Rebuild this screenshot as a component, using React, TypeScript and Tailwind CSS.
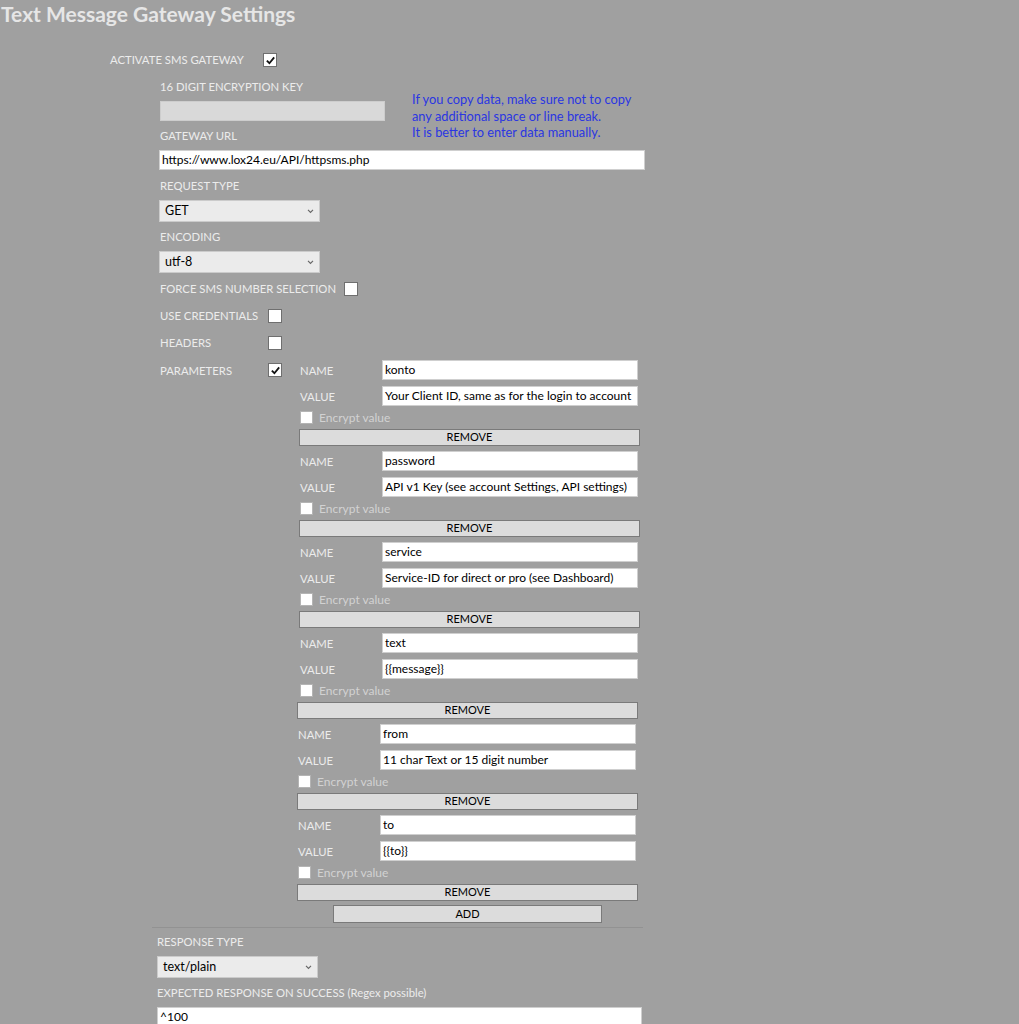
import React from "react";

type Param = { name: string; value: string; shift?: boolean; shiftRemove?: boolean };

const params: Param[] = [
  { name: "konto", value: "Your Client ID, same as for the login to account" },
  { name: "password", value: "API v1 Key (see account Settings, API settings)" },
  { name: "service", value: "Service-ID for direct or pro (see Dashboard)" },
  { name: "text", value: "{{message}}", shiftRemove: true },
  { name: "from", value: "11 char Text or 15 digit number", shift: true, shiftRemove: true },
  { name: "to", value: "{{to}}", shift: true, shiftRemove: true },
];

function CheckBox({ checked = false, small = false }: { checked?: boolean; small?: boolean }) {
  return (
    <span
      className={`flex shrink-0 items-center justify-center border bg-white ${
        small ? "h-[13px] w-[13px] border-[#b4b4b4]" : "h-[14px] w-[14px] border-[#6f6f6f]"
      }`}
    >
      {checked && (
        <svg viewBox="0 0 12 12" className="h-[11px] w-[11px]">
          <path d="M2 6.2 L4.8 9 L10 2.6" fill="none" stroke="#111" strokeWidth="2" />
        </svg>
      )}
    </span>
  );
}

function Label({ children, className = "" }: { children: React.ReactNode; className?: string }) {
  return (
    <div className={`h-[16px] whitespace-nowrap text-[11.3px] leading-[16px] text-[#ececec] uppercase ${className}`}>
      {children}
    </div>
  );
}

function TextBox({ value, className = "" }: { value: string; className?: string }) {
  return (
    <div
      className={`flex h-[20px] items-center overflow-hidden whitespace-nowrap border border-[#cfcfcf] bg-white px-[2px] text-[12px] text-black ${className}`}
    >
      {value}
    </div>
  );
}

function Select({ value, className = "" }: { value: string; className?: string }) {
  return (
    <div
      className={`flex h-[22px] w-[161px] items-center justify-between border border-[#cbcbcb] bg-[#ebebeb] pl-[5px] pr-[5px] text-[12.5px] text-black ${className}`}
    >
      <span>{value}</span>
      <svg viewBox="0 0 8 6" className="h-[5px] w-[7px]">
        <path d="M1 1 L4 4 L7 1" fill="none" stroke="#666" strokeWidth="1.4" />
      </svg>
    </div>
  );
}

function Button({ label, className = "" }: { label: string; className?: string }) {
  return (
    <div
      className={`flex items-center justify-center border border-[#7a7a7a] bg-[#dcdcdc] text-[11px] text-black ${className}`}
    >
      {label}
    </div>
  );
}

function ParamBlock({ p }: { p: Param }) {
  return (
    <div className="flex flex-col">
      <div className={`flex h-[20px] items-center ${p.shift ? "-ml-[2px]" : ""}`}>
        <span className="w-[82px] pt-[2px] text-[11.3px] text-[#ececec]">NAME</span>
        <TextBox value={p.name} className="w-[256px]" />
      </div>
      <div className={`mt-[6px] flex h-[20px] items-center ${p.shift ? "-ml-[2px]" : ""}`}>
        <span className="w-[82px] pt-[2px] text-[11.3px] text-[#ececec]">VALUE</span>
        <TextBox value={p.value} className="w-[256px]" />
      </div>
      <div className={`mt-[5px] flex h-[13px] items-center gap-[6px] ${p.shift ? "-ml-[2px]" : ""}`}>
        <CheckBox small />
        <span className="text-[12px] text-[#d2d2d2]">Encrypt value</span>
      </div>
      <Button label="REMOVE" className={`mt-[5px] h-[17px] w-[341px] ${p.shiftRemove ? "-ml-[3px]" : "-ml-[1px]"}`} />
    </div>
  );
}

export default function App() {
  return (
    <div className="min-h-[1024px] bg-[#a0a0a0]" style={{ fontFamily: "Lato, sans-serif" }}>
      <h1 className="h-[28px] pl-[1px] pt-[1px] text-[21px] font-bold leading-[26px] text-[#e6e6e6]">
        Text Message Gateway Settings
      </h1>

      <div className="mt-[25px] flex h-[14px] items-center pl-[110px]">
        <span className="w-[153px] whitespace-nowrap pt-[1px] text-[11.3px] text-[#ececec]">ACTIVATE SMS GATEWAY</span>
        <CheckBox checked />
      </div>

      <div className="pl-[159px]">
        <div className="flex">
          <div className="flex w-[253px] flex-col">
            <Label className="mt-[12px] pl-[1px]">16 Digit Encryption Key</Label>
            <div className="mt-[6px] ml-[1px] h-[20px] w-[225px] border border-[#cdcdcd] bg-[#d9d9d9]" />
            <Label className="mt-[7px] pl-[1px]">Gateway URL</Label>
          </div>
          <div className="mt-[24px] text-[12.8px] leading-[16.5px] text-[#2a36e2]">
            <div>If you copy data, make sure not to copy</div>
            <div>any additional space or line break.</div>
            <div>It is better to enter data manually.</div>
          </div>
        </div>
        <TextBox value="https://www.lox24.eu/API/httpsms.php" className="mt-[6px] w-[486px]" />

        <Label className="mt-[8px] pl-[1px]">Request Type</Label>
        <Select value="GET" className="mt-[6px]" />
        <Label className="mt-[7px] pl-[1px]">Encoding</Label>
        <Select value="utf-8" className="mt-[6px]" />

        <div className="mt-[9px] flex h-[14px] items-center pl-[1px]">
          <span className="w-[184px] whitespace-nowrap pt-[1px] text-[11.3px] text-[#ececec]">FORCE SMS NUMBER SELECTION</span>
          <CheckBox />
        </div>
        <div className="mt-[13px] flex h-[14px] items-center pl-[1px]">
          <span className="w-[108px] whitespace-nowrap pt-[1px] text-[11.3px] text-[#ececec]">USE CREDENTIALS</span>
          <CheckBox />
        </div>
        <div className="mt-[13px] flex h-[14px] items-center pl-[1px]">
          <span className="w-[108px] whitespace-nowrap pt-[1px] text-[11.3px] text-[#ececec]">HEADERS</span>
          <CheckBox />
        </div>

        <div className="mt-[10px] flex pl-[1px]">
          <div className="flex h-[20px] w-[140px] items-center">
            <span className="w-[108px] pt-[2px] text-[11.3px] text-[#ececec]">PARAMETERS</span>
            <CheckBox checked />
          </div>
          <div className="flex flex-col gap-[5px]">
            {params.map((p) => (
              <ParamBlock key={p.name} p={p} />
            ))}
            <div className="-mt-[1px] -ml-[3px] flex w-[341px] justify-center">
              <Button label="ADD" className="h-[18px] w-[269px]" />
            </div>
          </div>
        </div>
      </div>

      <div className="mt-[4px] ml-[152px] h-px w-[491px] bg-[#929292]" />

      <div className="pl-[157px]">
        <Label className="mt-[6px]">Response Type</Label>
        <Select value="text/plain" className="mt-[6px]" />
        <div className="mt-[7px] h-[16px] whitespace-nowrap text-[11.3px] leading-[16px] text-[#ececec]">
          EXPECTED RESPONSE ON SUCCESS (Regex possible)
        </div>
        <TextBox value="^100" className="mt-[6px] w-[485px]" />
      </div>
    </div>
  );
}
